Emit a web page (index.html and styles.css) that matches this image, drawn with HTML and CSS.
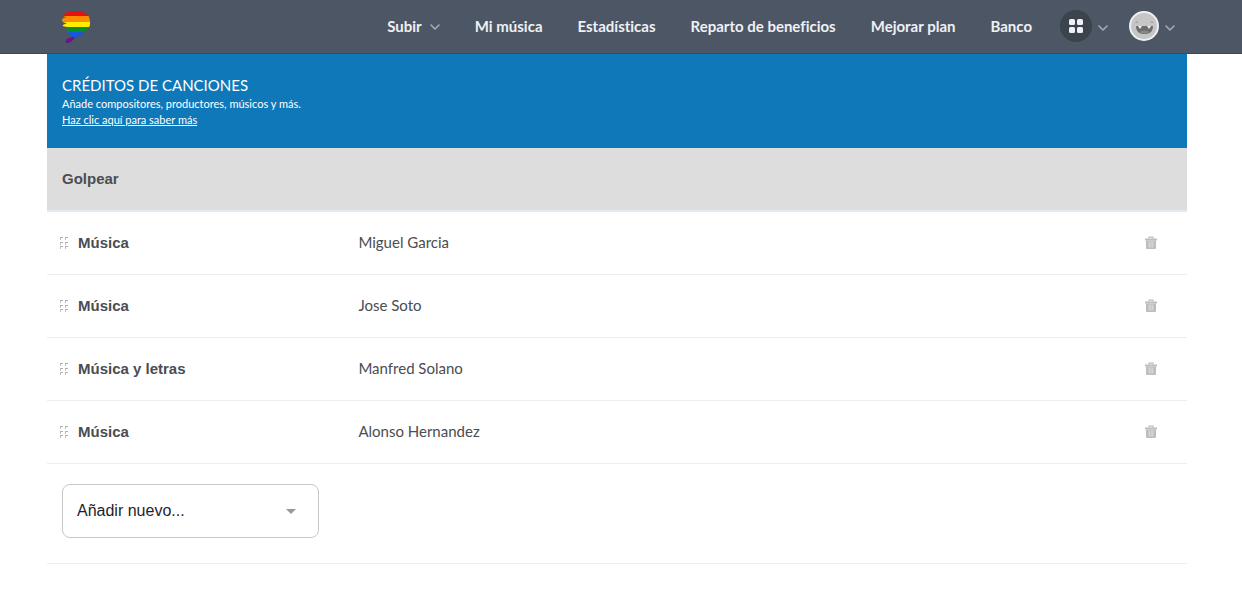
FILE: index.html
```html
<!DOCTYPE html>
<html lang="es">
<head>
    <meta charset="UTF-8">
    <meta name="viewport" content="width=device-width, initial-scale=1.0">
    <title>Créditos de canciones</title>
    <link rel="stylesheet" href="styles.css">
</head>
<body>
    <!-- Iconos compartidos -->
    <svg class="sprite" aria-hidden="true">
        <symbol id="chevron" viewBox="0 0 10 6">
            <path d="M1 1l4 4 4-4" fill="none" stroke="currentColor" stroke-width="1.6" stroke-linecap="round" stroke-linejoin="round"/>
        </symbol>
        <symbol id="grip" viewBox="0 0 8 12">
            <path d="M0 .5h3M5 .5h3M0 5.500h3M5 5.500h3M0 9.500h3M5 9.500h3" stroke="#b5adb4"/>
            <path d="M.5 1v2M5.500 1v2M.5 6v2M5.500 6v2M.5 10v2M5.500 10v2" stroke="#cbb9c4"/>
        </symbol>
        <symbol id="trash" viewBox="0 0 12 14">
            <path d="M4 2.500V1.200h4v1.300" fill="none" stroke="#bdbdbd" stroke-width="1.200"/>
            <path d="M0 2.500h12v2H0z" fill="#bdbdbd"/>
            <path d="M1 4.500h10V12q0 1-1 1H2q-1 0-1-1z" fill="#bdbdbd"/>
            <path d="M3.500 5.500h5v6h-5z" fill="#d3d3d8"/>
            <path d="M6 5.500v6" stroke="#c4c4cc"/>
        </symbol>
    </svg>

    <header>
        <a href="#" class="logo" aria-label="Inicio">
            <svg width="30" height="34" viewBox="0 0 30 34">
                <defs>
                    <clipPath id="logo-shape">
                        <path d="M3 5C4 2 9 1 14 1C21 1 26 3 28 7C30 12 29 17 27 19C25 21 23 21 20 22C24 23 23 26 19 26L14 27C13 30 9 33 6 33C4 33 4 31 6 29C7 28 9 28 11 27C9 26 8 24 7 22C5 20 5 18 8 17C3 17 1 16 2 15C3 14 5 14 6 13C3 13 1 12 1 10C1 8 3 8 6 7C3 7 2 6 3 5Z"/>
                    </clipPath>
                </defs>
                <g clip-path="url(#logo-shape)">
                    <path d="M0 0h30v6H0z" fill="#e3120b"/>
                    <path d="M0 6h30v6H0z" fill="#ff8c00"/>
                    <path d="M0 12h30v5H0z" fill="#ffed00"/>
                    <path d="M0 17h30v5H0z" fill="#078d20"/>
                    <path d="M0 22h30v5H0z" fill="#1558dc"/>
                    <path d="M0 27h30v7H0z" fill="#6d1389"/>
                </g>
            </svg>
        </a>
        <nav>
            <a href="#">Subir <svg class="chevron"><use href="#chevron"/></svg></a>
            <a href="#">Mi música</a>
            <a href="#">Estadísticas</a>
            <a href="#">Reparto de beneficios</a>
            <a href="#">Mejorar plan</a>
            <a href="#">Banco</a>
        </nav>
        <div class="menus">
            <button type="button" class="menu-btn" aria-label="Aplicaciones">
                <svg width="32" height="32" viewBox="0 0 32 32">
                    <circle cx="16" cy="16" r="16" fill="#3b434d"/>
                    <g fill="#eef1f5">
                        <rect x="9" y="9" width="6" height="6" rx="1.500"/>
                        <rect x="17" y="9" width="6" height="6" rx="1.500"/>
                        <rect x="9" y="17" width="6" height="6" rx="1.500"/>
                        <rect x="17" y="17" width="6" height="6" rx="1.500"/>
                    </g>
                </svg>
                <svg class="chevron"><use href="#chevron"/></svg>
            </button>
            <button type="button" class="menu-btn" aria-label="Cuenta">
                <svg width="30" height="30" viewBox="0 0 30 30">
                    <circle cx="15" cy="15" r="14" fill="#c6c6c6" stroke="#edf0f3" stroke-width="2"/>
                    <path d="M6.500 12q1.200-3 2.500 0M21.500 12q1.200-3 2.500 0" fill="none" stroke="#999" stroke-width="1"/>
                    <path d="M7 15h17c0 5.500-3 8-8.500 8S7 20.500 7 15z" fill="#6d6d6d"/>
                    <path d="M9 15h4l-2 3zM18 15h4l-2 3z" fill="#eee"/>
                    <path d="M10.500 21q5-2.500 10 0-5 3-10 0z" fill="#8a8a8a"/>
                </svg>
                <svg class="chevron"><use href="#chevron"/></svg>
            </button>
        </div>
    </header>

    <main>
        <section class="banner">
            <h1>CRÉDITOS DE CANCIONES</h1>
            <p>Añade compositores, productores, músicos y más.</p>
            <a href="#">Haz clic aquí para saber más</a>
        </section>

        <table class="credits">
            <colgroup>
                <col class="col-role">
                <col>
                <col class="col-actions">
            </colgroup>
            <thead>
                <tr>
                    <th colspan="3">Golpear</th>
                </tr>
            </thead>
            <tbody>
                <tr>
                    <th scope="row"><div class="role"><svg class="grip"><use href="#grip"/></svg>Música</div></th>
                    <td>Miguel Garcia</td>
                    <td class="actions"><button type="button" aria-label="Eliminar Miguel Garcia"><svg class="trash"><use href="#trash"/></svg></button></td>
                </tr>
                <tr>
                    <th scope="row"><div class="role"><svg class="grip"><use href="#grip"/></svg>Música</div></th>
                    <td>Jose Soto</td>
                    <td class="actions"><button type="button" aria-label="Eliminar Jose Soto"><svg class="trash"><use href="#trash"/></svg></button></td>
                </tr>
                <tr>
                    <th scope="row"><div class="role"><svg class="grip"><use href="#grip"/></svg>Música y letras</div></th>
                    <td>Manfred Solano</td>
                    <td class="actions"><button type="button" aria-label="Eliminar Manfred Solano"><svg class="trash"><use href="#trash"/></svg></button></td>
                </tr>
                <tr>
                    <th scope="row"><div class="role"><svg class="grip"><use href="#grip"/></svg>Música</div></th>
                    <td>Alonso Hernandez</td>
                    <td class="actions"><button type="button" aria-label="Eliminar Alonso Hernandez"><svg class="trash"><use href="#trash"/></svg></button></td>
                </tr>
            </tbody>
        </table>

        <!-- Añadir crédito -->
        <form class="add-credit">
            <div class="select-box">
                <select aria-label="Añadir nuevo crédito">
                    <option>Añadir nuevo...</option>
                    <option>Música</option>
                    <option>Música y letras</option>
                </select>
                <svg class="arrow" viewBox="0 0 10 5"><path d="M0 0h10L5 5z" fill="#999"/></svg>
            </div>
        </form>
    </main>
</body>
</html>
```

FILE: styles.css
```css
* {
    box-sizing: border-box;
}

body {
    margin: 0;
    background: #fff;
    color: #4a4d52;
    font-family: Lato, sans-serif;
    font-size: 15px;
    font-variant-ligatures: none;
}

button {
    padding: 0;
    border: none;
    background: none;
    cursor: pointer;
}

svg {
    display: block;
    flex: none;
}

.sprite {
    position: absolute;
    width: 0;
    height: 0;
}

header {
    display: flex;
    align-items: center;
    height: 54px;
    padding: 0 67px 0 61px;
    background: #4d5664;
    border-bottom: 1px solid #3f4753;
}

nav {
    display: flex;
    gap: 35px;
    margin-left: auto;
    padding-bottom: 2px;
}

nav a {
    display: flex;
    align-items: center;
    gap: 8px;
    color: #eef1f5;
    font-size: 15px;
    font-weight: bold;
    line-height: 20px;
    text-decoration: none;
    white-space: nowrap;
}

.chevron {
    width: 10px;
    height: 6px;
    margin-top: 3px;
    color: #a3abb7;
}

.menus {
    display: flex;
    align-items: center;
    gap: 21px;
    margin-left: 28px;
    padding-bottom: 1px;
}

.menu-btn {
    display: flex;
    align-items: center;
    gap: 6px;
}

main {
    max-width: 1242px;
    margin: 0 auto;
    padding: 0 55px 0 47px;
}

.banner {
    padding: 20px 15px;
    background: #0f78b9;
    color: #fff;
    font-size: 11px;
    line-height: 16px;
}

.banner h1 {
    margin: 0;
    font-size: 15px;
    font-weight: normal;
    line-height: 22px;
}

.banner p {
    margin: 0;
}

.banner a {
    color: #fff;
}

.credits {
    width: 100%;
    border-collapse: separate;
    border-spacing: 0;
    table-layout: fixed;
    line-height: 20px;
}

.col-role {
    width: 26%;
}

.col-actions {
    width: 80px;
}

.credits th,
.credits td {
    height: 63px;
    padding: 0 15px;
    border-bottom: 1px solid #e8eef1;
    text-align: left;
}

.credits td {
    padding-bottom: 2px;
}

.credits th {
    font-family: "Liberation Sans", Arial, sans-serif;
    font-weight: bold;
}

.credits thead th {
    height: 64px;
    background: #ddd;
    background-clip: padding-box;
    border-bottom: 2px solid #e4ecf2;
}

.credits tbody th {
    padding-left: 13px;
}

.role {
    display: flex;
    align-items: center;
    gap: 10px;
}

.grip {
    width: 8px;
    height: 12px;
}

.credits .actions {
    padding: 0 30px 0 0;
}

.actions button {
    display: block;
    margin-left: auto;
}

.trash {
    width: 12px;
    height: 14px;
}

.add-credit {
    padding: 20px 15px 25px;
    border-bottom: 1px solid #e8eef1;
}

.select-box {
    position: relative;
    max-width: 257px;
}

.select-box select {
    width: 100%;
    height: 54px;
    padding: 0 40px 2px 14px;
    appearance: none;
    background: #fff;
    border: 1px solid #c4c7cc;
    border-radius: 8px;
    color: #1c1f2b;
    font-family: "Liberation Sans", Arial, sans-serif;
    font-size: 16px;
}

.arrow {
    position: absolute;
    top: 25px;
    right: 23px;
    width: 10px;
    height: 5px;
    pointer-events: none;
}
```
